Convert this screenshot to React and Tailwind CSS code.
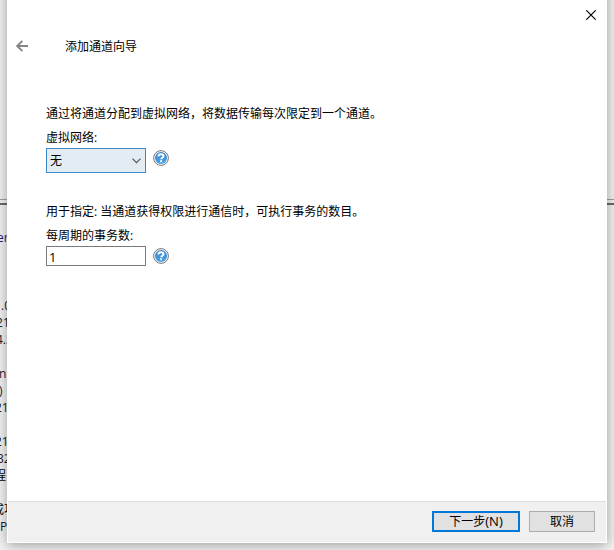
const logLines = [
  { text: 'er', color: 'text-[#15157a]', offset: '-ml-[3px]' },
  { text: '' },
  { text: '' },
  { text: '' },
  { text: '.0', color: 'text-[#202030]', offset: 'ml-[1px]' },
  { text: '21', color: 'text-[#202030]', offset: '-ml-[4px]' },
  { text: '4.3', color: 'text-[#202030]', offset: '-ml-[4px]' },
  { text: '' },
  { text: 'n', color: 'text-[#202030]', offset: '-ml-[1px]' },
  { text: ')', color: 'text-[#202030]', offset: '-ml-[1px]' },
  { text: '21', color: 'text-[#202030]', offset: '-ml-[5px]' },
  { text: '' },
  { text: '21', color: 'text-[#202030]', offset: '-ml-[5px]' },
  { text: '32', color: 'text-[#202030]', offset: '-ml-[3px]' },
  { text: '程', color: 'text-black', offset: '-ml-[6px]' },
  { text: '' },
  { text: '成功', color: 'text-black', offset: '-ml-[8px]' },
  { text: 'P', color: 'text-[#15153a]', offset: '' },
];

function HelpIcon() {
  return (
    <svg className="block h-4 w-4 shrink-0" viewBox="0 0 16 16">
      <defs>
        <linearGradient id="helpFill" x1="0" y1="0" x2="0" y2="1">
          <stop offset="0" stopColor="#3585cf" />
          <stop offset="1" stopColor="#4ba4e8" />
        </linearGradient>
      </defs>
      <circle cx="8" cy="8" r="7.4" fill="#f8f8f8" stroke="#777777" strokeWidth="1" />
      <circle cx="8" cy="8" r="6" fill="url(#helpFill)" />
      <path
        d="M5.4 6.4C5.4 4.9 6.5 4.3 8 4.3s2.5.7 2.5 1.9c0 1.6-2.3 1.6-2.3 3.1"
        fill="none"
        stroke="#ffffff"
        strokeWidth="1.9"
      />
      <rect x="7.1" y="10.3" width="2" height="1.9" fill="#ffffff" />
    </svg>
  );
}

function BackgroundWindow() {
  return (
    <div className="flex h-full flex-col bg-[#f2f2f2]">
      <div className="h-[199px] shrink-0" />
      <div className="h-[6px] shrink-0 border-t border-b-2 border-t-[#a0a0a0] border-b-[#696969]" />
      <div className="flex flex-col pt-[24px]">
        {logLines.map((line, i) => (
          <div key={i} className={`h-[17px] text-[12px] leading-[17px] whitespace-nowrap ${line.color || ''}`}>
            <span className={`inline-block ${line.offset || ''}`}>{line.text}</span>
          </div>
        ))}
      </div>
    </div>
  );
}

export default function App() {
  return (
    <div className="relative h-[550px] w-[614px] overflow-hidden font-['Open_Sans','Noto_Sans_CJK_SC',sans-serif] text-[12px] text-black">
      <BackgroundWindow />
      <div className="absolute top-[-30px] left-[7px] flex h-[573px] w-[600px] flex-col bg-white pt-[30px] shadow-[0_2px_12px_rgba(0,0,0,0.36)]">
        <div className="flex h-[30px] shrink-0 justify-end pt-[10px] pr-[11px]">
          <svg className="block h-[10px] w-[10px]" viewBox="0 0 10 10">
            <path d="M.3.3l9.4 9.4M9.7.3L.3 9.7" fill="none" stroke="#000000" strokeWidth="1.15" />
          </svg>
        </div>
        <div className="flex h-[32px] shrink-0 items-center pl-[9px]">
          <svg className="block h-[12px] w-[12px]" viewBox="0 0 12 12">
            <path d="M6.4.8L1.2 6l5.2 5.2M1.3 6H12" fill="none" stroke="#858585" strokeWidth="1.9" />
          </svg>
          <span className="ml-[37px] pt-[2px] leading-[16px]">添加通道向导</span>
        </div>

        <div className="flex flex-1 flex-col pt-[43px] pl-[39px]">
          <p className="h-[24px] leading-[17px] whitespace-nowrap">
            通过将通道分配到虚拟网络，将数据传输每次限定到一个通道。
          </p>
          <label className="h-[19px] leading-[17px]">虚拟网络:</label>
          <div className="flex h-[25px] gap-[7px]">
            <div className="flex w-[100px] items-center justify-between border border-[#3c88c8] bg-[#e3ebf3] pr-[4px] pl-[3px]">
              <span>无</span>
              <svg className="block h-[6px] w-[9px]" viewBox="0 0 9 6">
                <path d="M.5.7l4 4 4-4" fill="none" stroke="#505050" strokeWidth="1.1" />
              </svg>
            </div>
            <div className="pt-[2px]">
              <HelpIcon />
            </div>
          </div>

          <p className="mt-[30px] h-[24px] leading-[17px] whitespace-nowrap">
            用于指定: 当通道获得权限进行通信时，可执行事务的数目。
          </p>
          <label className="h-[19px] leading-[17px]">每周期的事务数:</label>
          <div className="flex h-[20px] items-center gap-[7px]">
            <div className="flex h-[20px] w-[100px] items-center border border-[#7a7a7a] bg-white pt-px pl-[2px] text-[13px] leading-[16px]">
              1
            </div>
            <HelpIcon />
          </div>
        </div>

        <div className="mx-px mb-px flex h-[41px] shrink-0 justify-end gap-[9px] border-t border-[#dfdfdf] bg-[#f0f0f0] pt-[9px] pr-[11px]">
          <button className="flex h-[21px] w-[88px] items-center justify-center border-2 border-[#0078d7] bg-[#e1e1e1]">
            <span>
              下一步<span className="text-[13px] leading-none">(N)</span>
            </span>
          </button>
          <button className="flex h-[21px] w-[66px] items-center justify-center border border-[#adadad] bg-[#e1e1e1]">
            取消
          </button>
        </div>
      </div>
    </div>
  );
}
